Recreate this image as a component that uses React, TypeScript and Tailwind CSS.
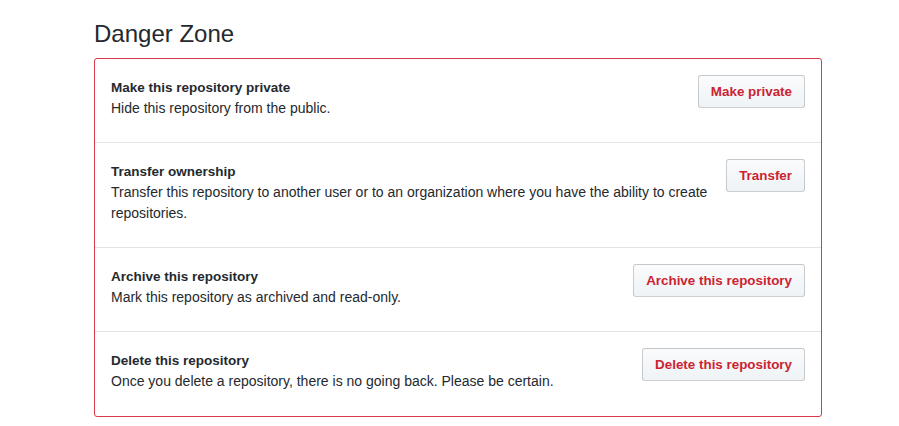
const rows = [
  {
    title: 'Make this repository private',
    desc: 'Hide this repository from the public.',
    action: 'Make private',
  },
  {
    title: 'Transfer ownership',
    desc: 'Transfer this repository to another user or to an organization where you have the ability to create repositories.',
    action: 'Transfer',
  },
  {
    title: 'Archive this repository',
    desc: 'Mark this repository as archived and read-only.',
    action: 'Archive this repository',
  },
  {
    title: 'Delete this repository',
    desc: 'Once you delete a repository, there is no going back. Please be certain.',
    action: 'Delete this repository',
  },
]

export default function App() {
  return (
    <div
      className="min-h-[426px] bg-white pt-[16px] pl-[94px] text-[#24292e]"
      style={{ fontFamily: '"Segoe UI", "Liberation Sans", Arial, sans-serif' }}
    >
      <h2 className="mb-[6px] text-[24px] leading-[36px] font-normal">Danger Zone</h2>
      <div className="w-[728px] rounded-[3px] border border-[#d73a49]">
        {rows.map((row, i) => (
          <div
            key={row.title}
            className={
              'flex items-start gap-4 p-4 text-[14px] leading-[21px]' +
              (i < rows.length - 1 ? ' border-b border-[#e1e4e8]' : ' pb-[17px]')
            }
          >
            <div className="flex-1 pt-[2px] pb-[7px]">
              <div className="text-[13.5px] font-semibold">{row.title}</div>
              <p>{row.desc}</p>
            </div>
            <button className="h-[33px] shrink-0 rounded-[3px] border border-[rgba(27,31,35,0.2)] bg-gradient-to-b from-[#fafbfc] to-[#eff3f6] px-3 text-[13.4px] font-semibold text-[#cb2431]">
              {row.action}
            </button>
          </div>
        ))}
      </div>
    </div>
  )
}
